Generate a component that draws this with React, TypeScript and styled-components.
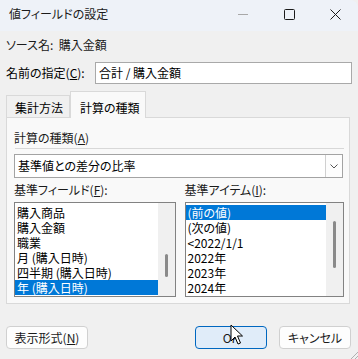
import React from 'react';
import styled, { createGlobalStyle } from 'styled-components';

const GlobalStyle = createGlobalStyle`
  html, body {
    margin: 0;
    padding: 0;
    background: #f0f0f0;
  }
  body {
    font-family: 'Noto Sans CJK JP', 'Noto Sans', sans-serif;
    font-size: 12px;
    font-feature-settings: 'palt';
    color: #000;
  }
`;

const Window = styled.div`
  position: relative;
  width: 358px;
  height: 359px;
  background: #f0f0f0;
  display: flex;
  flex-direction: column;
  overflow: hidden;
  border-top-right-radius: 8px;
`;

const TitleBar = styled.div`
  height: 31px;
  flex-shrink: 0;
  display: flex;
  align-items: center;
  background: #eef2f8;
`;

const Title = styled.div`
  flex: 1;
  padding-left: 9px;
  margin-top: -3px;
  line-height: 14px;
  color: #1b1b1b;
`;

const CaptionButton = styled.div`
  width: 46px;
  height: 31px;
  display: flex;
  align-items: center;
  justify-content: center;
  margin-top: -3px;
`;

const Body = styled.div`
  display: flex;
  flex-direction: column;
  padding: 0 6px;
`;

const InfoRow = styled.div`
  margin-top: 7px;
  height: 14px;
  line-height: 14px;
  color: #1a1a1a;
`;

const NameRow = styled.div`
  margin-top: 10px;
  height: 22px;
  display: flex;
  align-items: center;
`;

const NameLabel = styled.div`
  width: 89px;
  line-height: 14px;
`;

const TextInput = styled.div`
  box-sizing: border-box;
  width: 257px;
  height: 22px;
  border: 1px solid #a9a9a9;
  background: #fff;
  padding-left: 3px;
  line-height: 20px;
`;

const U = styled.span`
  text-decoration: underline;
  text-underline-offset: 1px;
`;

const TabRow = styled.div`
  margin-top: 7px;
  height: 27px;
  display: flex;
  align-items: flex-end;
  position: relative;
  z-index: 1;
`;

const Tab = styled.div<{ $active?: boolean }>`
  box-sizing: border-box;
  width: ${(p) => (p.$active ? 76 : 64)}px;
  height: ${(p) => (p.$active ? 27 : 22)}px;
  margin-bottom: ${(p) => (p.$active ? 0 : 1)}px;
  padding-left: ${(p) => (p.$active ? 9 : 8)}px;
  padding-top: ${(p) => (p.$active ? 9 : 5)}px;
  line-height: 14px;
  border: 1px solid #d9d9d9;
  border-bottom: none;
  background: ${(p) => (p.$active ? '#f9f9f9' : '#f0f0f0')};
`;

const Panel = styled.div`
  box-sizing: border-box;
  margin-top: -1px;
  width: 344px;
  height: 187px;
  border: 1px solid #d9d9d9;
  background: #f9f9f9;
  padding: 13px 5px 6px 7px;
  display: flex;
  flex-direction: column;
`;

const Label = styled.div`
  height: 14px;
  line-height: 14px;
  color: #1a1a1a;
`;

const Separator = styled.div`
  margin: 3px 0 0 1px;
  height: 1px;
  background: #d8d8d8;
`;

const Select = styled.div`
  box-sizing: border-box;
  margin-top: 5px;
  width: 329px;
  height: 24px;
  border: 1px solid #a3a3a3;
  background: #fff;
  display: flex;
`;

const SelectValue = styled.div`
  flex: 1;
  padding-left: 3px;
  line-height: 22px;
`;

const ArrowBox = styled.div`
  width: 16px;
  border-left: 1px solid #d0d0d0;
  background: #fdfdfd;
  display: flex;
  align-items: center;
  justify-content: center;
`;

const Columns = styled.div`
  margin-top: 5px;
  display: flex;
  gap: 9px;
`;

const Column = styled.div<{ $width: number }>`
  width: ${(p) => p.$width}px;
  display: flex;
  flex-direction: column;
`;

const ListBox = styled.div`
  box-sizing: border-box;
  margin-top: 5px;
  height: 95px;
  border: 1px solid #828282;
  background: #fff;
  display: flex;
`;

const Items = styled.div`
  flex: 1;
  padding-top: 2px;
  overflow: hidden;
`;

const Item = styled.div<{ $selected?: boolean }>`
  height: 15px;
  line-height: 15px;
  padding-left: 2px;
  white-space: nowrap;
  background: ${(p) => (p.$selected ? '#0078d7' : 'transparent')};
  color: ${(p) => (p.$selected ? '#fff' : '#000')};
`;

const Track = styled.div`
  position: relative;
  width: 17px;
  background: #f0f0f0;
`;

const Thumb = styled.div<{ $top: number; $height: number }>`
  position: absolute;
  left: 7px;
  top: ${(p) => p.$top}px;
  width: 3px;
  height: ${(p) => p.$height}px;
  border-radius: 2px;
  background: #8a8a8a;
`;

const Footer = styled.div`
  margin-top: 22px;
  display: flex;
  align-items: center;
  gap: 12px;
  padding-right: 1px;
`;

const Button = styled.div<{ $width: number; $primary?: boolean }>`
  box-sizing: border-box;
  width: ${(p) => p.$width}px;
  height: 23px;
  border: 1px solid ${(p) => (p.$primary ? '#0067c0' : '#d0d0d0')};
  border-radius: 4px;
  background: ${(p) => (p.$primary ? '#e0ecf9' : '#fdfdfd')};
  display: flex;
  align-items: center;
  justify-content: center;
  line-height: 14px;
  color: #1a1a1a;
`;

const Spacer = styled.div`
  flex: 1;
`;

const Cursor = styled.svg`
  position: absolute;
  left: 230px;
  top: 324px;
`;

const Grip = styled.svg`
  position: absolute;
  right: 0;
  bottom: 0;
`;

const fields = ['購入商品', '購入金額', '職業', '月 (購入日時)', '四半期 (購入日時)', '年 (購入日時)'];
const items = ['(前の値)', '(次の値)', '<2022/1/1', '2022年', '2023年', '2024年'];

const App: React.FC = () => {
  return (
    <Window>
      <GlobalStyle />
      <TitleBar>
        <Title>値フィールドの設定</Title>
        <CaptionButton>
          <svg width="10" height="10" viewBox="0 0 10 10">
            <line x1="0" y1="5.5" x2="10" y2="5.5" stroke="#a8a8a8" strokeWidth="1" />
          </svg>
        </CaptionButton>
        <CaptionButton>
          <svg width="11" height="11" viewBox="0 0 11 11">
            <rect x="0.5" y="0.5" width="10" height="10" rx="1" fill="none" stroke="#1a1a1a" strokeWidth="1" />
          </svg>
        </CaptionButton>
        <CaptionButton>
          <svg width="11" height="11" viewBox="0 0 11 11">
            <path d="M0.5 0.5 L10.5 10.5 M10.5 0.5 L0.5 10.5" stroke="#1a1a1a" strokeWidth="1" />
          </svg>
        </CaptionButton>
      </TitleBar>
      <Body>
        <InfoRow>ソース名:&nbsp; 購入金額</InfoRow>
        <NameRow>
          <NameLabel>
            名前の指定(<U>C</U>):
          </NameLabel>
          <TextInput>合計 / 購入金額</TextInput>
        </NameRow>
        <TabRow>
          <Tab>集計方法</Tab>
          <Tab $active>計算の種類</Tab>
        </TabRow>
        <Panel>
          <Label>
            計算の種類(<U>A</U>)
          </Label>
          <Separator />
          <Select>
            <SelectValue>基準値との差分の比率</SelectValue>
            <ArrowBox>
              <svg width="8" height="5" viewBox="0 0 8 5">
                <path d="M0.5 0.5 L4 4 L7.5 0.5" fill="none" stroke="#555" strokeWidth="1" />
              </svg>
            </ArrowBox>
          </Select>
          <Columns>
            <Column $width={162}>
              <Label>
                基準フィールド(<U>F</U>):
              </Label>
              <ListBox>
                <Items>
                  {fields.map((f, i) => (
                    <Item key={f} $selected={i === fields.length - 1}>
                      {f}
                    </Item>
                  ))}
                </Items>
                <Track>
                  <Thumb $top={51} $height={23} />
                </Track>
              </ListBox>
            </Column>
            <Column $width={160}>
              <Label>
                基準アイテム(<U>I</U>):
              </Label>
              <ListBox>
                <Items>
                  {items.map((f, i) => (
                    <Item key={f} $selected={i === 0}>
                      {f}
                    </Item>
                  ))}
                </Items>
                <Track>
                  <Thumb $top={18} $height={47} />
                </Track>
              </ListBox>
            </Column>
          </Columns>
        </Panel>
        <Footer>
          <Button $width={82}>
            表示形式(<U>N</U>)
          </Button>
          <Spacer />
          <Button $width={72} $primary>
            OK
          </Button>
          <Button $width={72}>キャンセル</Button>
        </Footer>
      </Body>
      <Cursor width="14" height="22" viewBox="0 0 14 22">
        <path
          d="M1 1 L1 17 L5 13 L8 20 L10.5 19 L7.5 12 L12.5 12 Z"
          fill="#fff"
          stroke="#000"
          strokeWidth="1"
          strokeLinejoin="round"
        />
      </Cursor>
      <Grip width="9" height="9" viewBox="0 0 9 9">
        <path d="M9 2 L2 9 M9 6 L6 9" stroke="#b0b0b0" strokeWidth="1" />
      </Grip>
    </Window>
  );
};

export default App;
